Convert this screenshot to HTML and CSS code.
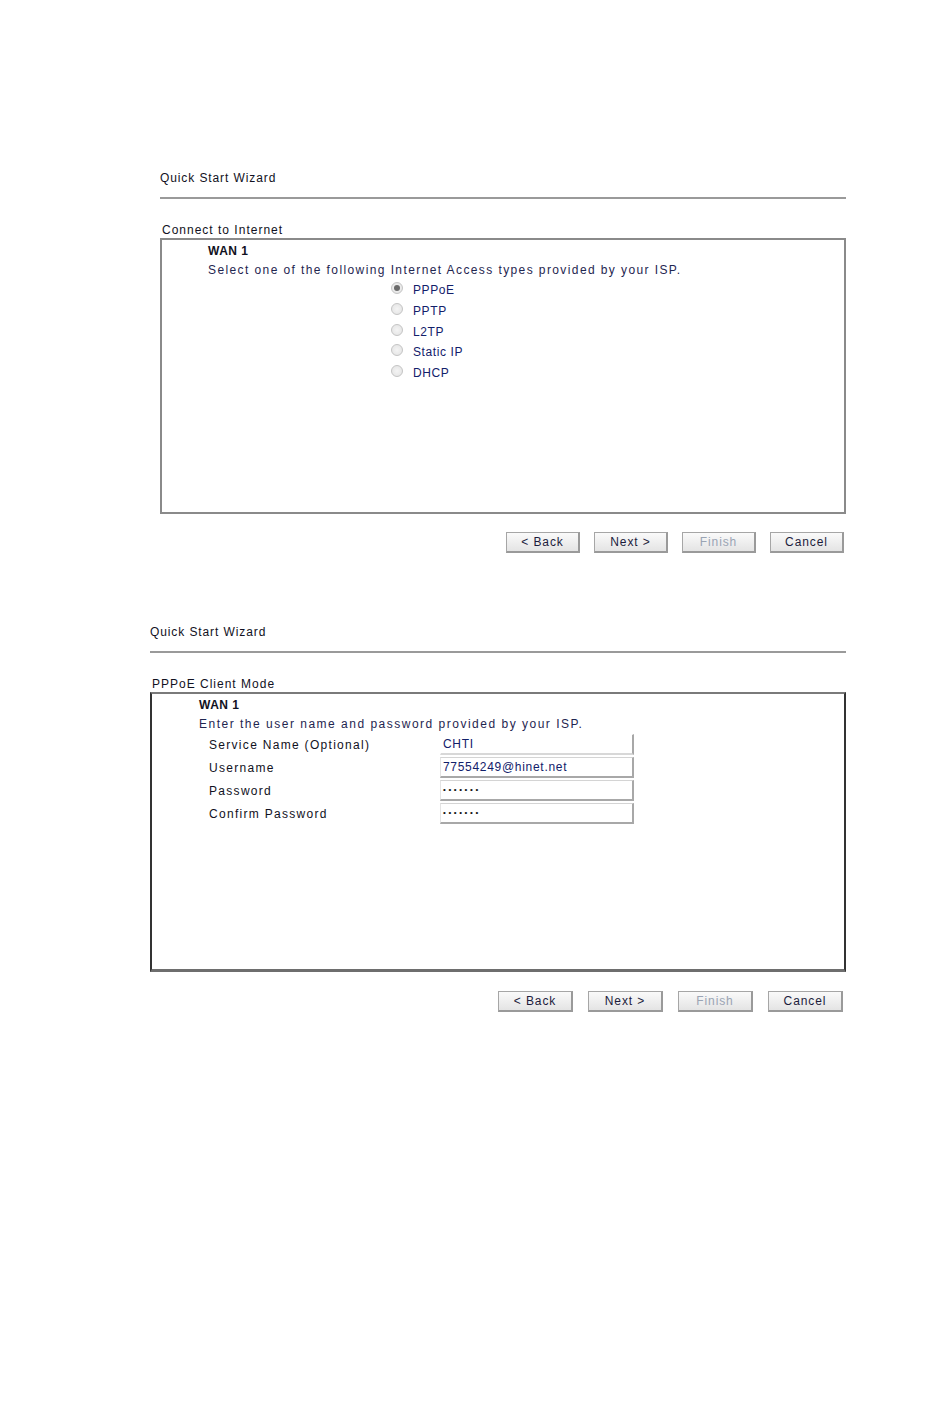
FILE: index.html
```html
<!DOCTYPE html>
<html lang="en">
<head>
  <meta charset="UTF-8">
  <title>Quick Start Wizard</title>
  <link rel="stylesheet" href="styles.css">
</head>
<body>
  <div class="wizard wizard-one">
    <div class="title">Quick Start Wizard</div>
    <div class="rule"></div>
    <div class="section-label">Connect to Internet</div>
    <div class="box box-one">
      <div class="wan">WAN 1</div>
      <div class="hint">Select one of the following Internet Access types provided by your ISP.</div>
      <ul class="radios">
        <li><span class="radio checked"></span>PPPoE</li>
        <li><span class="radio"></span>PPTP</li>
        <li><span class="radio"></span>L2TP</li>
        <li><span class="radio"></span>Static IP</li>
        <li><span class="radio"></span>DHCP</li>
      </ul>
    </div>
    <div class="buttons">
      <button>&lt; Back</button>
      <button>Next &gt;</button>
      <button class="disabled">Finish</button>
      <button>Cancel</button>
    </div>
  </div>

  <div class="wizard wizard-two">
    <div class="title">Quick Start Wizard</div>
    <div class="rule"></div>
    <div class="section-label">PPPoE Client Mode</div>
    <div class="box box-two">
      <div class="wan">WAN 1</div>
      <div class="hint">Enter the user name and password provided by your ISP.</div>
      <div class="fields">
        <div class="field">
          <span class="field-label">Service Name (Optional)</span>
          <span class="input no-top">CHTI</span>
        </div>
        <div class="field">
          <span class="field-label">Username</span>
          <span class="input">77554249@hinet.net</span>
        </div>
        <div class="field">
          <span class="field-label">Password</span>
          <span class="input dots">&bull;&bull;&bull;&bull;&bull;&bull;&bull;</span>
        </div>
        <div class="field">
          <span class="field-label">Confirm Password</span>
          <span class="input dots">&bull;&bull;&bull;&bull;&bull;&bull;&bull;</span>
        </div>
      </div>
    </div>
    <div class="buttons">
      <button>&lt; Back</button>
      <button>Next &gt;</button>
      <button class="disabled">Finish</button>
      <button>Cancel</button>
    </div>
  </div>
</body>
</html>
```

FILE: styles.css
```css
body {
  margin: 0;
  background: #fff;
  font-family: "Liberation Sans", Arial, sans-serif;
  font-size: 12px;
  color: #111122;
}
.wizard {
  box-sizing: border-box;
}
.wizard-one {
  margin-left: 160px;
  width: 686px;
  padding-top: 170px;
}
.wizard-two {
  margin-left: 150px;
  width: 696px;
  padding-top: 71px;
}
.title {
  height: 16px;
  line-height: 16px;
  letter-spacing: 0.9px;
}
.rule {
  height: 2px;
  background: #9a9a9a;
  margin-top: 11px;
}
.section-label {
  height: 16px;
  line-height: 16px;
  margin-top: 23px;
  padding-left: 2px;
  letter-spacing: 1px;
}
.wizard-two .section-label {
  margin-top: 23px;
  letter-spacing: 1px;
}
.box {
  box-sizing: border-box;
}
.box-one {
  height: 276px;
  border: 2px solid #8a8a8a;
  padding: 2px 0 0 46px;
}
.box-two {
  height: 280px;
  border-left: 2px solid #333;
  border-right: 2px solid #333;
  border-top: 2px solid #7a7a7a;
  border-bottom: 3px solid #6e6e6e;
  padding: 2px 0 0 47px;
}
.wan {
  height: 18px;
  line-height: 18px;
  font-weight: bold;
  font-size: 12px;
  letter-spacing: 0.5px;
}
.hint {
  height: 20px;
  line-height: 20px;
  letter-spacing: 1.4px;
  color: #1f2650;
}
.box-two .hint {
  letter-spacing: 1.5px;
}
.radios {
  list-style: none;
  margin: 0 0 0 183px;
  padding: 0;
}
.radios li {
  display: flex;
  align-items: center;
  height: 20.7px;
  letter-spacing: 0.6px;
  color: #12206a;
}
.radio {
  box-sizing: border-box;
  width: 12px;
  height: 12px;
  border-radius: 50%;
  border: 1px solid #c4c4c4;
  background: radial-gradient(circle, #f4f4f4 0, #e2e2e2 100%);
  margin-right: 10px;
  margin-top: -4px;
  position: relative;
}
.radio.checked::after {
  content: "";
  position: absolute;
  left: 2px;
  top: 2px;
  width: 6px;
  height: 6px;
  border-radius: 50%;
  background: #6a6a6a;
}
.fields {
  margin-top: -1px;
}
.field {
  display: flex;
  align-items: center;
  height: 23px;
}
.field-label {
  width: 241px;
  padding-left: 10px;
  box-sizing: border-box;
  letter-spacing: 1.3px;
}
.input {
  box-sizing: border-box;
  width: 194px;
  height: 21px;
  line-height: 18px;
  padding-left: 2px;
  border-top: 1px solid #d4d4d4;
  border-left: 1px solid #e4e4e4;
  border-right: 2px solid #a8a8a8;
  border-bottom: 2px solid #a8a8a8;
  letter-spacing: 0.7px;
  color: #12206a;
}
.input.no-top {
  border-top-color: #fff;
  border-left-color: #fff;
  border-bottom-color: #d8d8d8;
}
.input.dots {
  font-size: 8px;
  letter-spacing: 2.6px;
  line-height: 17px;
  color: #111;
}
.buttons {
  display: flex;
  justify-content: flex-end;
  gap: 14px;
  margin-top: 18px;
  padding-right: 2px;
}
.wizard-one button {
  width: 74px;
}
.wizard-two .buttons {
  margin-top: 19px;
  gap: 15px;
  padding-right: 3px;
}
button {
  box-sizing: border-box;
  width: 75px;
  height: 21px;
  padding: 0;
  font-family: "Liberation Sans", Arial, sans-serif;
  font-size: 12px;
  letter-spacing: 0.9px;
  color: #1c1c3c;
  background: linear-gradient(#fafafa, #e4e4e4);
  border: 1px solid #a6a6a6;
  border-right: 2px solid #9a9a9a;
  border-bottom: 2px solid #9a9a9a;
  border-radius: 0;
}
button.disabled {
  color: #9aa4b4;
}
```
